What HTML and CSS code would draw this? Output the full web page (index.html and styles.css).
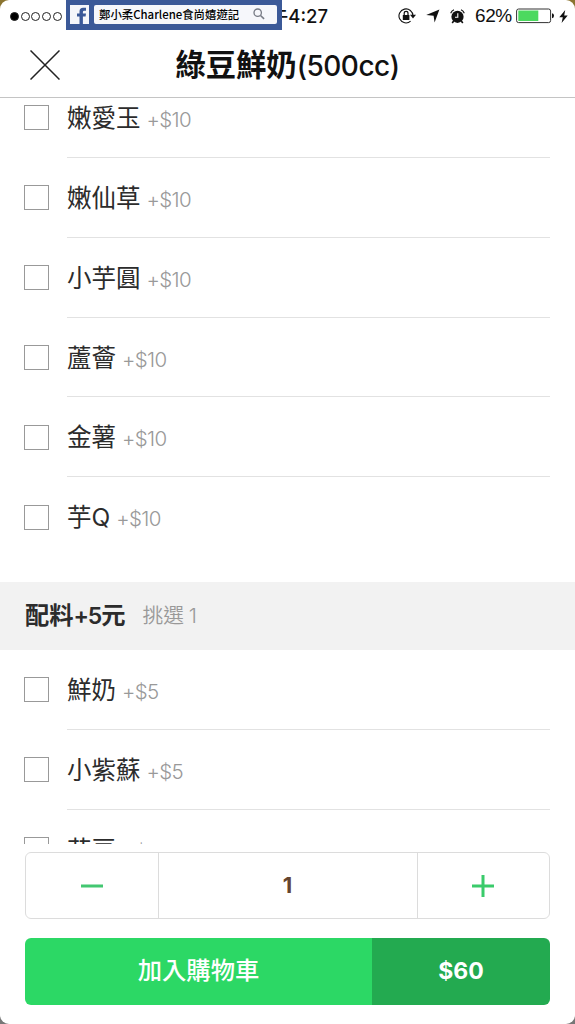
FILE: index.html
```html
<!DOCTYPE html>
<html lang="zh-Hant">
<head>
<meta charset="utf-8">
<title>綠豆鮮奶(500cc)</title>
<link rel="stylesheet" href="styles.css">
</head>
<body>
<main class="screen">
  <div class="status">
    <div class="signal"><i class="dot full"></i><i class="dot"></i><i class="dot"></i><i class="dot"></i><i class="dot"></i></div>
    <div class="clock">下午4:27</div>
    <div class="indicators">
      <svg class="lock" width="18" height="16" viewBox="0 0 18 16"><path d="M12.6 13.2A7 7 0 1 1 15 8" fill="none" stroke="#111" stroke-width="1.1"/><path d="M12 6.8h6L15 10.6z" fill="#111"/><path d="M4.8 7h6.6v5H4.8z" fill="#111"/><path d="M6.2 7V5.3a1.9 1.9 0 0 1 3.8 0V7" fill="none" stroke="#111" stroke-width="1.2"/></svg>
      <svg class="arrow" width="14" height="14" viewBox="0 0 14 14"><path d="M13.4.6 8.6 13.4 7.6 6.7.2 6z" fill="#111"/></svg>
      <svg class="alarm" width="15" height="15" viewBox="0 0 15 15"><circle cx="7.5" cy="7.8" r="6.1" fill="#111"/><path d="M.7 4.2A5.5 5.5 0 0 1 4 .8M11 .8A5.5 5.5 0 0 1 14.3 4.2" fill="none" stroke="#111" stroke-width="1.1"/><path d="m3.7 12-1.5 2M11.3 12l1.5 2" stroke="#111" stroke-width="1.6"/><path d="M7.8 4.3V8.2H5" fill="none" stroke="#fff" stroke-width="1.1"/></svg>
      <span class="percent">62%</span>
      <svg class="battery" width="39" height="16" viewBox="0 0 39 16"><rect x=".6" y="1" width="34" height="13.6" rx="2" fill="#fff" stroke="#333"/><path d="M2.3 2.5h20v10.6h-20z" fill="#4cd95f"/><path d="M36 5.3q2 .4 2 2.5t-2 2.5z" fill="#111"/></svg>
      <svg class="bolt" width="9" height="13" viewBox="0 0 9 13"><path d="M6.2 0 .3 7.2h3.5L2.6 13l6.1-7.6H5.2z" fill="#111"/></svg>
    </div>
    <div class="watermark">
      <svg width="19" height="19" viewBox="0 0 19 19"><path d="M0 0h19v19H0z" fill="#f5f6fa"/><path d="M9.5 19V11.5H7V8.5h2.5V6.4Q9.5 2.8 13.1 2.8H16v3h-1.9q-1.2 0-1.2 1.2v1.5H16l-.4 3h-2.7V19z" fill="#3b5998"/></svg>
      <div class="search"><span class="handle">鄭小柔Charlene食尚嬉遊記</span>
        <svg width="12" height="12" viewBox="0 0 12 12"><circle cx="4.7" cy="4.7" r="3.7" fill="none" stroke="#777b85" stroke-width="1.3"/><path d="m7.5 7.5 3.6 3.4" stroke="#777b85" stroke-width="1.6"/></svg>
      </div>
    </div>
  </div>
  <header class="titlebar">
    <svg class="close" width="30" height="30" viewBox="0 0 30 30"><path d="m.5.5 29 29m0-29-29 29" stroke="#222" stroke-width="1.5"/></svg>
    <h1 class="title">綠豆鮮奶<span class="size">(500cc)</span></h1>
  </header>
  <section class="options">
    <ul class="group first">
      <li class="row"><i class="box"></i><div class="label">嫩愛玉 <span class="price">+$10</span></div></li>
      <li class="row"><i class="box"></i><div class="label">嫩仙草 <span class="price">+$10</span></div></li>
      <li class="row"><i class="box"></i><div class="label">小芋圓 <span class="price">+$10</span></div></li>
      <li class="row"><i class="box"></i><div class="label">蘆薈 <span class="price">+$10</span></div></li>
      <li class="row"><i class="box"></i><div class="label">金薯 <span class="price">+$10</span></div></li>
      <li class="row last"><i class="box"></i><div class="label">芋Q <span class="price">+$10</span></div></li>
    </ul>
    <div class="heading"><h2 class="name">配料<span class="amount">+5</span>元</h2><span class="hint">挑選 1</span></div>
    <ul class="group">
      <li class="row"><i class="box"></i><div class="label">鮮奶 <span class="price">+$5</span></div></li>
      <li class="row"><i class="box"></i><div class="label">小紫蘇 <span class="price">+$5</span></div></li>
      <li class="row last"><i class="box"></i><div class="label">花豆 <span class="price">+$5</span></div></li>
    </ul>
  </section>
  <footer class="footer">
    <div class="stepper">
      <button class="step"><svg width="22" height="22" viewBox="0 0 22 22"><path d="M0 11h22" stroke="#43c771" stroke-width="3"/></svg></button>
      <span class="count">1</span>
      <button class="step"><svg width="22" height="22" viewBox="0 0 22 22"><path d="M0 11h22M11 0v22" stroke="#3acb6b" stroke-width="3"/></svg></button>
    </div>
    <button class="cart"><span class="add">加入購物車</span><span class="total">$60</span></button>
  </footer>
</main>
</body>
</html>
```
FILE: styles.css
```css
* { box-sizing: border-box; }
body { margin: 0; background: linear-gradient(#8b7430 50%, #777 50%); font-family: Inter, "Noto Sans CJK TC", sans-serif; color: #2c2c2c; }
h1, h2, ul { margin: 0; padding: 0; font-size: inherit; }
svg { display: block; flex: none; }
button { border: 0; padding: 0; background: none; font: inherit; }
.screen { width: 575px; height: 1024px; display: flex; flex-direction: column; overflow: hidden; background: #fff; border-radius: 9px; }

.status { position: relative; height: 32px; flex: none; display: flex; align-items: center; justify-content: space-between; padding: 0 7px 0 10px; color: #111; }
.signal { display: flex; gap: 1.7px; }
.dot { width: 9px; height: 9px; border: 1px solid #222; border-radius: 50%; }
.dot.full { background: #000; }
.clock { position: absolute; right: 247px; top: 5px; font-size: 18.5px; line-height: 22px; font-weight: 500; }
.indicators { display: flex; align-items: center; }
.arrow { margin-left: 10px; }
.alarm { margin-left: 10px; }
.percent { margin-left: 10px; width: 38px; font-family: "Liberation Sans", sans-serif; font-size: 19px; letter-spacing: -.4px; }
.battery { margin-left: 3px; }
.bolt { margin-left: 4px; }
.watermark { position: absolute; left: 66px; top: 0; width: 216px; height: 30px; padding: 5px 5px 6px 4px; display: flex; gap: 5px; background: #3b5998; }
.search { flex: 1; display: flex; align-items: center; justify-content: space-between; padding: 0 12px 0 5px; background: #f6f7fb; border-radius: 2px; }
.search svg { margin-top: -1px; }
.handle { font: 500 11.4px/17px "Noto Sans CJK TC", sans-serif; color: #000; white-space: nowrap; }

.titlebar { position: relative; height: 66px; flex: none; display: flex; justify-content: center; align-items: center; border-bottom: 1px solid #c4c4c4; }
.close { position: absolute; left: 30px; top: 18px; }
.title { padding-top: 2px; font-size: 30.3px; line-height: 40px; font-weight: 600; color: #111; white-space: nowrap; }
.size { font-size: 28px; font-weight: 500; letter-spacing: -.5px; }

.options { height: 746px; flex: none; overflow: hidden; }
.group { list-style: none; }
.first { margin-top: -20px; padding-bottom: 25px; }
.row { height: 79.85px; display: flex; align-items: center; padding: 0 25px 0 24px; }
.box { width: 25px; height: 25px; flex: none; margin-right: 18px; border: 1.5px solid #999; }
.label { flex: 1; height: 100%; font-size: 24.5px; line-height: 80px; border-bottom: 1px solid #e2e2e2; white-space: pre; word-spacing: -1px; }
.last .label { border-color: transparent; }
.price { color: #999; font-size: 20.5px; font-weight: 350; letter-spacing: -.6px; }
.heading { height: 68px; display: flex; align-items: center; gap: 17px; padding: 0 25px 4px; background: #f2f2f2; }
.name { margin-top: -2px; font-size: 24.3px; font-weight: 600; }
.amount { font-size: 23px; letter-spacing: -1.2px; }
.hint { font-size: 20.7px; font-weight: 350; color: #999; word-spacing: -1px; }

.footer { padding: 8px 25px 0; }
.stepper { height: 67px; display: flex; border: 1.5px solid #dcdcdc; border-radius: 6px; }
.step { width: 131.5px; display: grid; place-items: center; }
.count { flex: 1; display: grid; place-items: center; padding-bottom: 2px; border: solid #dcdcdc; border-width: 0 1.5px; font-size: 22px; font-weight: 700; color: #65442f; }
.cart { display: flex; width: 100%; height: 67px; margin-top: 19px; border-radius: 6px; overflow: hidden; color: #fff; font-size: 24.3px; font-weight: 500; }
.add { width: 347px; line-height: 65px; background: #2cd865; }
.total { flex: 1; line-height: 67px; background: #23aa50; font-size: 23px; font-weight: 700; }
```
